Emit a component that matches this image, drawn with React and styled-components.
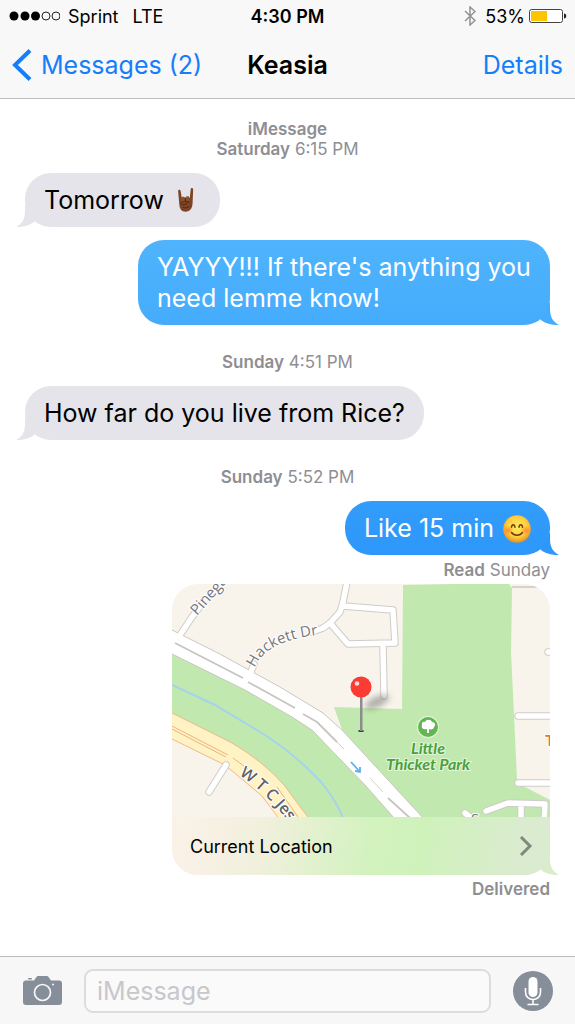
import React from 'react';
import styled, { createGlobalStyle, css } from 'styled-components';

const GlobalStyle = createGlobalStyle`
    *{
        box-sizing: border-box;
    }
    body{
        margin: 0;
        background: #fff;
        font-family: Inter, "Liberation Sans", sans-serif;
        color: #000;
    }
    button, input{
        font: inherit;
    }
`;

const messages = [
    { type: 'time', service: 'iMessage', day: 'Saturday', hour: '6:15 PM' },
    { type: 'text', from: 'them', text: 'Tomorrow', emoji: 'horns' },
    { type: 'text', from: 'me', text: "YAYYY!!! If there's anything you need lemme know!", tone: 'light' },
    { type: 'time', day: 'Sunday', hour: '4:51 PM' },
    { type: 'text', from: 'them', text: 'How far do you live from Rice?' },
    { type: 'time', day: 'Sunday', hour: '5:52 PM' },
    { type: 'text', from: 'me', text: 'Like 15 min', emoji: 'smile' },
    { type: 'receipt', status: 'Read', when: 'Sunday' },
    { type: 'map', label: 'Current Location' },
    { type: 'receipt', status: 'Delivered' },
];

function HornsEmoji() {
    return (
        <svg width="28" height="28" viewBox="1 1 30 30" role="img" aria-label="sign of the horns">
            <path d="M6.500 5.500C6.500 3.500 8.900 3.500 9.200 5.500L10.500 13L19 12.500L20 3.500C20.200 1.500 22.700 1.700 22.600 3.900L22 18C21.800 24 19.500 27.500 14.500 27.500C10 27.500 8 24 7.800 20Z" fill="#7d4526" />
            <path d="M10 13c.2-2 3.800-2 4 0v5h-4zM14.500 12.500c.2-2 4-2 4 0v5h-4z" fill="#8d5130" />
            <path d="M9 18.500c2-2 6-3 9-1.500M14.300 13v4M10.500 20c3 0 5-.5 6.500-2.500M12 23c2 .8 5 .3 6.500-1" fill="none" stroke="#4d2612" strokeWidth="1" strokeLinecap="round" />
        </svg>
    );
}

function SmileEmoji() {
    return (
        <svg width="28" height="28" viewBox="0 0 28 28" role="img" aria-label="smiling face">
            <defs>
                <radialGradient id="face" cx="50%" cy="42%" r="56%">
                    <stop offset="0" stopColor="#ffe95c" />
                    <stop offset=".65" stopColor="#ffcf3d" />
                    <stop offset="1" stopColor="#e9961f" />
                </radialGradient>
                <radialGradient id="cheek">
                    <stop offset="0" stopColor="#ff7b3a" stopOpacity=".8" />
                    <stop offset="1" stopColor="#ff7b3a" stopOpacity="0" />
                </radialGradient>
            </defs>
            <circle cx="14" cy="14" r="13.800" fill="url(#face)" />
            <circle cx="5" cy="15.500" r="5" fill="url(#cheek)" />
            <circle cx="23" cy="15.500" r="5" fill="url(#cheek)" />
            <path d="M8.500 12.200C9 9 11.500 9 12 12.200M16 12.200C16.500 9 19 9 19.500 12.200" fill="none" stroke="#6b3c0c" strokeWidth="1.500" strokeLinecap="round" />
            <path d="M8.500 17.500C11 21 17 21 19.500 17.500" fill="none" stroke="#6b3c0c" strokeWidth="1.500" strokeLinecap="round" />
        </svg>
    );
}

const emojis = { horns: HornsEmoji, smile: SmileEmoji };

function BubbleTail({ side, color }) {
    return (
        <Tail $side={side} viewBox="0 0 30 22" aria-hidden="true">
            <path d="M19 0H20V6C20 14 23 19 29 22C21 22 14 20 10 16L13 12L16 8Z" fill={color} />
        </Tail>
    );
}

const houseRoads = [
    'M140 48L151 44L158 39L168 28L171 18L175 -2',
    'M171 22L221 26L223 59L176 60L158 39',
    'M211 61L212 112',
    'M6 54L20 33L30 20',
    'M77 93L82 80',
    'M54 181L37 208',
    'M346 132H384',
    'M346 199H384',
    'M376 68H390',
    'M314 227L336 219L373 220L372 240M349 221V240',
    'M293 229L304 238',
];

function MapDrawing() {
    return (
        <MapSvg viewBox="0 0 378 291" preserveAspectRatio="xMidYMin slice" role="img" aria-label="Map of Little Thicket Park">
            <defs>
                <path id="pinegate" d="M25 32L62 -10" />
                <path id="hackett" d="M83 84Q93 57 146 51" />
                <path id="jester" d="M67 191Q92 206 120 242" />
                <filter id="soft" x="-50%" y="-50%" width="200%" height="200%">
                    <feGaussianBlur stdDeviation="3" />
                </filter>
            </defs>
            <rect width="378" height="291" fill="#f8f4ec" />

            {/* park land */}
            <path d="M231 1L336 -1L340 4L339 68L342 131L345 196L353 203L378 216V291H240L173 154L162 123L230 125Z" fill="#c1e8ae" />
            <path d="M0 64L80 106L140 140L240 240H134L110 201L60 162L0 132Z" fill="#c1e8ae" />
            <path d="M0 101L43 121L93 151Q125 172 150 199Q165 218 172 236" fill="none" stroke="#a5d3ec" strokeWidth="2" />

            {/* highway */}
            <path d="M-2 128L60 159Q92 178 112 201L138 236H108L90 212L53 181L-2 154Z" fill="#fff2c4" stroke="#f0b98a" strokeWidth="1" />
            <path d="M-2 141L56 171M-2 144L54 173M61 174L76 185M105 203L126 233" fill="none" stroke="#edb37c" strokeWidth="1" />

            {houseRoads.map((d) => (
                <path key={d} d={d} fill="none" stroke="#cfccc8" strokeWidth="7.500" strokeLinecap="round" strokeLinejoin="round" />
            ))}

            {/* main road */}
            <path d="M-2 45L46 69L108 103L151 129L170 146L252 235L223 235L193 201L140 146L120 133L73 106L-2 69Z" fill="#fff" stroke="#c9c7c1" strokeWidth="1" />
            {houseRoads.map((d) => (
                <path key={d} d={d} fill="none" stroke="#fff" strokeWidth="5.500" strokeLinecap="round" strokeLinejoin="round" />
            ))}
            <path d="M3 59L71 94M76 98L123 124M131 130L145 138L165 158M216 214L238 234" fill="none" stroke="#c8c4c1" strokeWidth="1.800" />
            <path d="M165 158L172 165M198 194L211 208" stroke="#d5d2cf" strokeWidth="1" />
            <path d="M179 178L188 188M188 183V188L183 187" fill="none" stroke="#5fb1e8" strokeWidth="1.800" />
            <path d="M340 3H366" stroke="#c9c7c1" strokeWidth="1.500" />

            <StreetName>
                <textPath href="#pinegate">Pinega</textPath>
            </StreetName>
            <StreetName>
                <textPath href="#hackett">Hackett Dr</textPath>
            </StreetName>
            <StreetName $bold>
                <textPath href="#jester">W T C Jes</textPath>
            </StreetName>
            <StreetName x="299" y="240">S</StreetName>
            <ShopName x="373" y="162">T</ShopName>

            <circle cx="256" cy="143" r="11" fill="#e4f6da" />
            <circle cx="256" cy="143" r="10" fill="#63b653" />
            <path d="M255 149V145C251 146 249 144 250 141C249 138 252 137 253 138C254 135 259 135 260 138C263 138 264 141 262 143C262 145 259 146 257 145V149Z" fill="#fff" />
            <ParkName x="256" y="170" textAnchor="middle">Little</ParkName>
            <ParkName x="256" y="186" textAnchor="middle">Thicket Park</ParkName>

            {/* pin */}
            <ellipse cx="205" cy="118" rx="13" ry="5" fill="#555" opacity=".45" filter="url(#soft)" transform="rotate(-25 205 118)" />
            <ellipse cx="189" cy="147" rx="3" ry="1" fill="#333" />
            <rect x="188" y="110" width="2.500" height="37" fill="#8c8c8c" />
            <circle cx="189" cy="103" r="10.500" fill="#fb3c35" />
            <circle cx="185" cy="99.500" r="2.300" fill="#ffd9d6" />
        </MapSvg>
    );
}

function Message({ message }) {
    if (message.type === 'time') {
        return (
            <TimeStamp>
                {message.service && <div><b>{message.service}</b></div>}
                <b>{message.day}</b> {message.hour}
            </TimeStamp>
        );
    }
    if (message.type === 'receipt') {
        return <Receipt><b>{message.status}</b> {message.when}</Receipt>;
    }
    if (message.type === 'map') {
        return (
            <MapBubble>
                <MapCard href="#location">
                    <MapDrawing />
                    <MapFooter>
                        <span>{message.label}</span>
                        <svg width="14" height="20" viewBox="0 0 14 20" fill="none" stroke="#7f8a7c" strokeWidth="3" aria-hidden="true">
                            <path d="M2 1L11 10L2 19" />
                        </svg>
                    </MapFooter>
                </MapCard>
                <BubbleTail side="right" color="#d9edcd" />
            </MapBubble>
        );
    }
    const mine = message.from === 'me';
    const light = message.tone === 'light';
    const Emoji = emojis[message.emoji];
    return (
        <Bubble $mine={mine} $light={light}>
            <span>{message.text}</span>
            {Emoji && <Emoji />}
            <BubbleTail side={mine ? 'right' : 'left'} color={mine ? (light ? '#45acfd' : '#2e97fb') : '#e5e4ea'} />
        </Bubble>
    );
}

function App() {
    return (
        <Screen>
            <GlobalStyle />
            <Header>
                <StatusBar>
                    <Carrier>
                        <svg width="52" height="10" viewBox="0 0 52 10" role="img" aria-label="Signal 3 of 5">
                            {[6, 17, 27.500].map((x) => <circle key={x} cx={x} cy="5" r="4.500" />)}
                            {[38, 48].map((x) => <circle key={x} cx={x} cy="5" r="4" fill="none" stroke="#222" strokeWidth="1" />)}
                        </svg>
                        <span>Sprint</span>
                        <Network>LTE</Network>
                    </Carrier>
                    <Clock>4:30 PM</Clock>
                    <Power>
                        <svg width="12" height="20" viewBox="0 0 12 20" fill="none" stroke="#929292" strokeWidth="1.500" role="img" aria-label="Bluetooth">
                            <path d="M1 5L11 14.500L6 19V1L11 5.500L1 15" />
                        </svg>
                        <span>53%</span>
                        <svg width="38" height="14" viewBox="0 0 38 14" role="img" aria-label="Battery">
                            <rect x=".5" y=".5" width="33" height="13" rx="2" fill="#fff" stroke="#444" />
                            <rect x="2" y="2" width="16" height="10" fill="#fdc500" />
                            <path d="M35 4.500C38 4.500 38 9.500 35 9.500Z" fill="#222" />
                        </svg>
                    </Power>
                </StatusBar>
                <NavBar>
                    <BackButton type="button">
                        <svg width="20" height="32" viewBox="0 0 20 32" fill="none" stroke="currentColor" strokeWidth="4" aria-hidden="true">
                            <path d="M18 1.500L3 16L18 30.500" />
                        </svg>
                        Messages (2)
                    </BackButton>
                    <Title>Keasia</Title>
                    <DetailsButton type="button">Details</DetailsButton>
                </NavBar>
            </Header>
            <Thread>
                {messages.map((message, i) => <Message key={i} message={message} />)}
            </Thread>
            <Composer>
                <IconButton type="button" aria-label="Camera">
                    <svg width="39" height="29" viewBox="0 0 39 29">
                        <path d="M3 4.500H11L13.500 1C14 .3 14.500 0 15.500 0H23.500C24.500 0 25 .3 25.500 1L28 4.500H36C38 4.500 39 5.500 39 7.500V26C39 28 38 29 36 29H3C1 29 0 28 0 26V7.500C0 5.500 1 4.500 3 4.500Z" fill="#858e99" />
                        <rect x="5" y="2" width="4" height="1.500" rx=".7" fill="#858e99" />
                        <circle cx="19.500" cy="16.500" r="8" fill="none" stroke="#f8f8f8" strokeWidth="1.700" />
                        <circle cx="30" cy="8.500" r="1" fill="#f8f8f8" />
                    </svg>
                </IconButton>
                <Field type="text" placeholder="iMessage" aria-label="iMessage" />
                <IconButton type="button" aria-label="Dictate">
                    <svg width="40" height="40" viewBox="0 0 40 40">
                        <circle cx="20" cy="20" r="20" fill="#858e99" />
                        <rect x="15.500" y="6" width="9" height="20" rx="4.500" fill="#fff" />
                        <path d="M12.500 17V21C12.500 31 27.500 31 27.500 21V17M20 28.500V33M14.500 33.500H25.500" fill="none" stroke="#fff" strokeWidth="1.600" />
                    </svg>
                </IconButton>
            </Composer>
        </Screen>
    );
}

const Screen = styled.div`
    min-height: 100vh;
    display: flex;
    flex-direction: column;
`;

const Header = styled.header`
    background: #f8f8f8;
    border-bottom: 1px solid #bdbdbf;
`;

const StatusBar = styled.div`
    display: grid;
    grid-template-columns: 1fr auto 1fr;
    align-items: center;
    height: 32px;
    padding: 0 8px;
    font-size: 18px;
`;

const Carrier = styled.div`
    display: flex;
    align-items: center;
    gap: 8px;
`;

const Network = styled.span`
    margin-left: 6px;
`;

const Clock = styled.div`
    font-weight: 600;
`;

const Power = styled.div`
    display: flex;
    align-items: center;
    justify-content: flex-end;
    gap: 4px;
    svg:first-child{
        margin-right: 5px;
    }
`;

const NavBar = styled.nav`
    display: grid;
    grid-template-columns: 1fr auto 1fr;
    align-items: center;
    height: 66px;
    padding: 0 12px;
`;

const NavButton = styled.button`
    border: 0;
    padding: 0;
    background: none;
    color: #157efb;
    font-size: 25px;
    cursor: pointer;
`;

const BackButton = styled(NavButton)`
    display: flex;
    align-items: center;
    gap: 9px;
    white-space: nowrap;
`;

const DetailsButton = styled(NavButton)`
    justify-self: end;
`;

const Title = styled.h1`
    margin: 0;
    font-size: 25px;
    font-weight: 600;
`;

const Thread = styled.main`
    flex: 1;
    display: flex;
    flex-direction: column;
    align-items: flex-start;
    padding: 20px 25px;
`;

const TimeStamp = styled.div`
    align-self: center;
    text-align: center;
    color: #8e8e93;
    font-size: 17px;
    line-height: 20px;
    margin-bottom: 14px;
    b{
        font-weight: 600;
    }
`;

const Bubble = styled.div`
    position: relative;
    display: flex;
    align-items: center;
    gap: 9px;
    max-width: 412px;
    padding: 12px 19px 11px;
    margin-bottom: 13px;
    border-radius: 26px;
    font-size: 25px;
    line-height: 31px;
    background: #e5e4ea;

    ${({ $mine, $light }) => $mine && css`
        align-self: flex-end;
        color: #fff;
        background: ${$light ? 'linear-gradient(#4fb4fc, #45acfd)' : 'linear-gradient(#329dfb, #2e97fb)'};
    `}

    & + ${TimeStamp}{
        margin-top: 14px;
    }
`;

const Tail = styled.svg`
    position: absolute;
    bottom: 0;
    width: 30px;
    height: 22px;
    ${({ $side }) => $side === 'right' ? 'right: -10px;' : 'left: -10px; transform: scaleX(-1);'}
`;

const Receipt = styled.div`
    align-self: flex-end;
    margin: 4px 0;
    color: #8e8e93;
    font-size: 17px;
    line-height: 20px;
    b{
        font-weight: 600;
    }
    ${Bubble} + &{
        margin-top: -8px;
    }
`;

const MapBubble = styled.div`
    position: relative;
    align-self: flex-end;
    width: 378px;
    max-width: 100%;
`;

const MapCard = styled.a`
    display: grid;
    height: 291px;
    border-radius: 26px;
    overflow: hidden;
    color: #000;
    text-decoration: none;
    & > *{
        grid-area: 1 / 1;
    }
`;

const MapSvg = styled.svg`
    width: 100%;
    height: 100%;
`;

const MapFooter = styled.div`
    align-self: end;
    display: flex;
    align-items: center;
    justify-content: space-between;
    height: 58px;
    padding: 0 17px 0 18px;
    font-size: 18px;
    background: linear-gradient(100deg, #faf1e7 4%, #f0f0dc 25%, #d3f2bf 52%, #cff2bb 66%, #dbebd0 92%);
`;

const StreetName = styled.text`
    font-family: "Open Sans", "Noto Sans", sans-serif;
    font-size: ${({ $bold }) => $bold ? '16px' : '15px'};
    font-weight: ${({ $bold }) => $bold ? 600 : 400};
    fill: ${({ $bold }) => $bold ? '#5f6368' : '#75777d'};
    stroke: #fff;
    stroke-width: 2px;
    paint-order: stroke;
`;

const PlaceName = styled.text`
    font-family: Lato, "Open Sans", sans-serif;
    font-size: 16px;
    font-weight: 700;
    stroke-width: 2px;
    paint-order: stroke;
`;

const ParkName = styled(PlaceName)`
    font-style: italic;
    fill: #4a9f3e;
    stroke: #e4f6da;
`;

const ShopName = styled(PlaceName)`
    fill: #e0773c;
    stroke: #fff;
`;

const Composer = styled.footer`
    display: flex;
    align-items: center;
    gap: 22px;
    height: 68px;
    padding: 0 22px 0 23px;
    background: #f7f7f7;
    border-top: 1px solid #bdbdbf;
`;

const IconButton = styled.button`
    display: flex;
    border: 0;
    padding: 0;
    background: none;
    cursor: pointer;
`;

const Field = styled.input`
    flex: 1;
    min-width: 0;
    height: 44px;
    padding: 0 11px;
    border: 2px solid #dcdcdf;
    border-radius: 9px;
    background: #fafafa;
    font-size: 25px;
    &::placeholder{
        color: #c7c7cc;
        opacity: 1;
    }
`;

export default App;
